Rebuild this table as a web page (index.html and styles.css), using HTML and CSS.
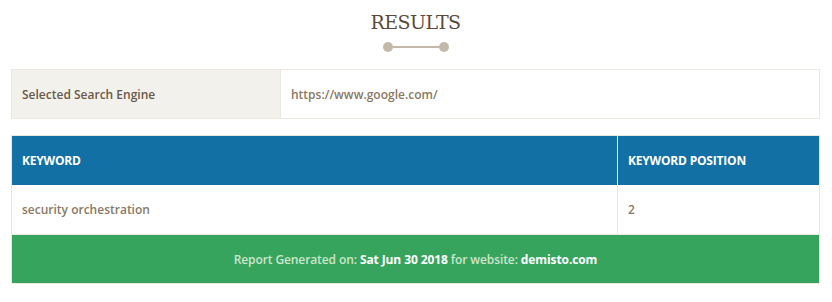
FILE: index.html
```html
<!DOCTYPE html>
<html>
<head>
    <title>Keyword Results</title>
    <link rel="stylesheet" href="styles.css">
</head>
<body>
    <div class="wrap">
        <div class="heading">
            <h2>RESULTS</h2>
            <div class="divider"><span class="dot"></span><span class="bar"></span><span class="dot"></span></div>
        </div>

        <table class="engine">
            <tr>
                <th>Selected Search Engine</th>
                <td>https://www.google.com/</td>
            </tr>
        </table>

        <table class="results">
            <thead>
                <tr>
                    <th class="col-kw">KEYWORD</th>
                    <th>KEYWORD POSITION</th>
                </tr>
            </thead>
            <tbody>
                <tr>
                    <td>security orchestration</td>
                    <td>2</td>
                </tr>
            </tbody>
            <tfoot>
                <tr>
                    <td colspan="2">Report Generated on: <b>Sat Jun 30 2018</b> for website: <b>demisto.com</b></td>
                </tr>
            </tfoot>
        </table>
    </div>
</body>
</html>
```

FILE: styles.css
```css
body { margin: 0; font-family: "Open Sans", sans-serif; font-size: 12px; font-weight: 600; color: #8a7864; background: #fff; }
.wrap { padding: 0 12px 0 11px; }
.heading { text-align: center; padding-top: 10px; }
.heading h2 { margin: 0; font-family: "DejaVu Serif", serif; font-weight: normal; font-size: 19px; color: #5b4a3b; letter-spacing: -0.6px; line-height: 24px; }
.divider { display: flex; justify-content: center; align-items: center; margin-top: 8px; }
.dot { width: 10px; height: 10px; border-radius: 50%; background: #c4b8a8; }
.bar { width: 46px; height: 2px; background: #c4b8a8; }

table { width: 100%; border-collapse: collapse; }
.engine { margin-top: 17px; border: 1px solid #ece7df; }
.engine th { width: 248px; background: #f3f1ec; color: #6a5948; font-weight: 600; text-align: left; padding: 0 10px; height: 48px; border-right: 1px solid #ece7df; }
.engine td { padding: 0 10px; height: 48px; }

.results { margin-top: 16px; border: 1px solid #ece7df; }
.results thead th { background: #1370a5; color: #fff; font-weight: 700; text-align: left; padding: 0 10px; height: 49px; letter-spacing: -0.2px; }
.results thead th.col-kw { width: 585px; border-right: 1px solid #f0ece4; }
.results tbody td { padding: 0 10px; height: 49px; border-bottom: 1px solid #ece7df; }
.results tbody td:first-child { border-right: 1px solid #ece7df; }
.results tfoot td { background: #37a45e; color: #cbe6c9; text-align: center; height: 48px; padding: 0; letter-spacing: -0.1px; }
.results tfoot b { color: #fff; font-weight: 700; }
```
